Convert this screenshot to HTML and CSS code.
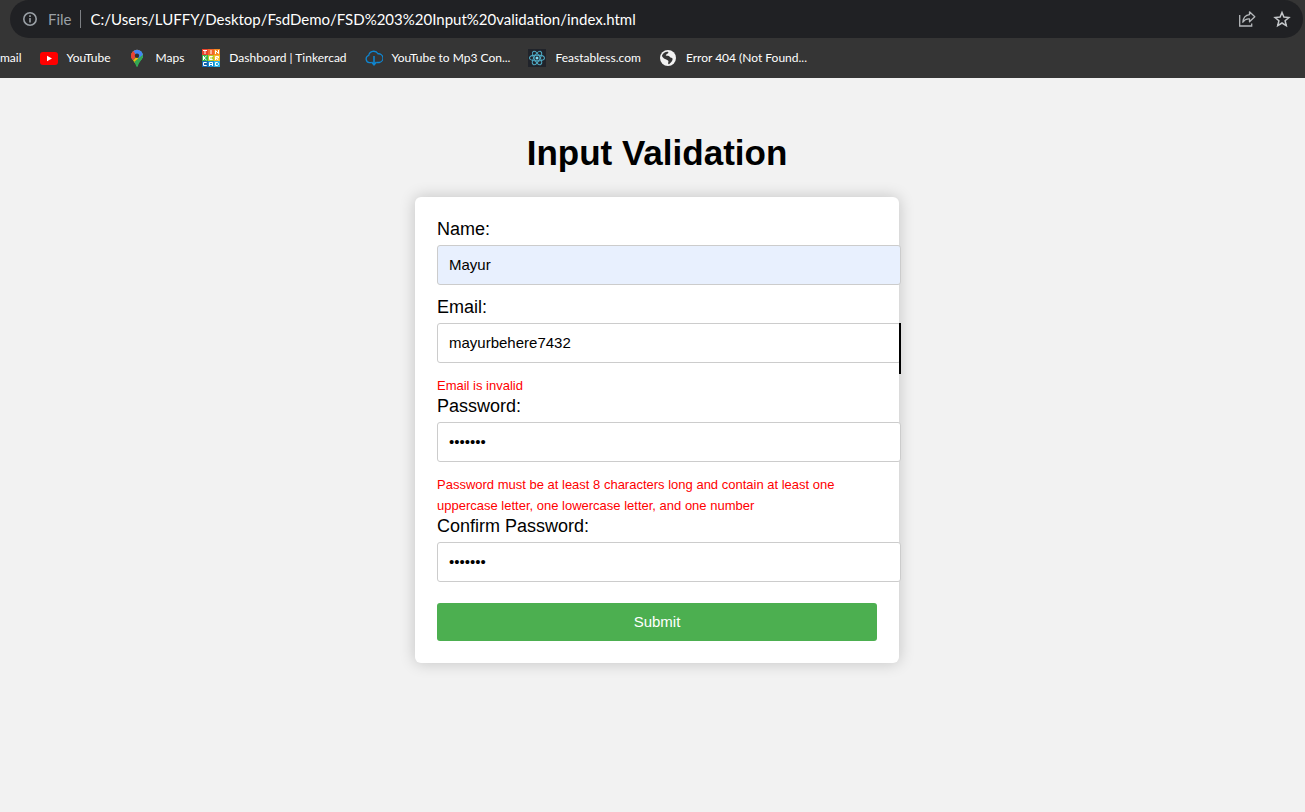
FILE: index.html
```html
<!DOCTYPE html>
<html lang="en">
<head>
<meta charset="utf-8">
<title>Input Validation</title>
<link rel="stylesheet" href="styles.css">
</head>
<body>
<header class="toolbar">
  <div class="address">
    <svg class="address-info" viewBox="0 0 16 16" width="16" height="16" aria-hidden="true"><circle cx="8" cy="8" r="6.2" fill="none" stroke="#9aa0a6" stroke-width="1.6"/><path d="M8 7v4.5M8 4.3v1.6" stroke="#9aa0a6" stroke-width="1.6"/></svg>
    <label class="address-scheme" for="url">File</label>
    <input class="address-url" id="url" type="text" spellcheck="false" value="C:/Users/LUFFY/Desktop/FsdDemo/FSD%203%20Input%20validation/index.html">
    <button class="icon-button" type="button" aria-label="Share"><svg viewBox="0 0 18 18" width="18" height="18" fill="none" stroke="#b4b7ba" stroke-width="1.3"><path d="M1.700 5v11h12v-2.500"/><path d="M11.500 1.800l5.300 5-5.300 5V9C8.500 8.700 6.500 9.700 4.800 12.200 5.200 7.800 7.700 5.200 11.500 4.700z" stroke-linejoin="round"/></svg></button>
    <button class="icon-button" type="button" aria-label="Bookmark this tab"><svg viewBox="0 0 18 18" width="18" height="18" fill="none" stroke="#c4c7ca" stroke-width="1.5"><path d="M9 2.500l1.900 4.600 5 .4-3.800 3.200 1.200 4.900L9 13l-4.300 2.600 1.200-4.900L2.100 7.500l5-.4z"/></svg></button>
  </div>
  <nav class="bookmarks" aria-label="Bookmarks">
    <a class="bookmark bookmark-cut" href="#">mail</a>
    <a class="bookmark" href="#"><svg viewBox="0 0 18 18" width="18" height="18"><rect y="3" width="18" height="13" rx="3" fill="#f00"/><path d="M7 6.700v5.600l5-2.800z" fill="#fff"/></svg>YouTube</a>
    <a class="bookmark" href="#"><svg viewBox="0 0 18 18" width="18" height="18"><defs><clipPath id="pin"><path d="M8 .8a6 6 0 0 1 6 6c0 4-4.300 5.500-5.100 10.200-.2 1-1.600 1-1.800 0C6.300 12.300 2 10.800 2 6.800a6 6 0 0 1 6-6z"/></clipPath></defs><g clip-path="url(#pin)"><path d="M0 0h18v18H0z" fill="#34a853"/><path d="M0 13L14 0H0z" fill="#ea4335"/><path d="M4 2l4-2h8L8 7z" fill="#4285f4"/><path d="M4 2L0 6l1 8 7-7z" fill="#ea4335"/><path d="M2 14l9-10 3 1-9 11z" fill="#fbbc04"/><path d="M8 7l5-6 3 6-6 5z" fill="#4285f4"/><path d="M11 8l4-3v8l-7 5-3-5z" fill="#34a853"/></g><circle cx="8" cy="6.800" r="2.200" fill="#303134"/></svg>Maps</a>
    <a class="bookmark" href="#"><svg viewBox="0 0 18 18" width="18" height="18"><path d="M0 0h6v6H0z" fill="#e8432d"/><path d="M6 0h6v6H6z" fill="#f2652b"/><path d="M12 0h6v6h-6z" fill="#f58a22"/><path d="M0 6h6v6H0z" fill="#36b449"/><path d="M6 6h6v6H6z" fill="#b0c92c"/><path d="M12 6h6v6h-6z" fill="#f5b920"/><path d="M0 12h6v6H0z" fill="#1266b0"/><path d="M6 12h6v6H6z" fill="#168bd0"/><path d="M12 12h6v6h-6z" fill="#27b2e7"/><path d="M1 1.500h4M3 1.500V5M9 1v4M13.500 5V1.500l3 3V1M1.500 7v4M4.500 7L2 9l2.500 2M10.700 7.500H7.500v3h3.200M7.500 9h2.500M13.500 11V7.500h3V9h-3l3 2M4.700 13.500H1.500v3h3.200M7.500 17v-3.500h3V17M7.500 15.500h3M13.500 13.500h2l1 1v1l-1 1h-2z" fill="none" stroke="#fff"/></svg>Dashboard | Tinkercad</a>
    <a class="bookmark" href="#"><svg viewBox="0 0 18 18" width="18" height="18" fill="none" stroke="#0f86d1" stroke-width="1.300"><path d="M6.300 13.700H4.500A3.700 3.700 0 0 1 3.700 6.500 5 5 0 0 1 13 4.800a4.400 4.400 0 0 1 1.300 8.700h-2.600"/><path d="M9 7v8.500M6.500 13L9 15.700l2.500-2.700" stroke-width="1.600"/></svg>YouTube to Mp3 Con...</a>
    <a class="bookmark" href="#"><svg viewBox="0 0 18 18" width="18" height="18"><path d="M0 0h18v18H0z" fill="#20232a"/><g fill="none" stroke="#4fa9c2" stroke-width="1.100"><ellipse cx="9" cy="9" rx="7.500" ry="2.900"/><ellipse cx="9" cy="9" rx="7.500" ry="2.900" transform="rotate(60 9 9)"/><ellipse cx="9" cy="9" rx="7.500" ry="2.900" transform="rotate(120 9 9)"/></g><circle cx="9" cy="9" r="1.500" fill="#7bdcf5"/></svg>Feastabless.com</a>
    <a class="bookmark" href="#"><svg viewBox="0 0 18 18" width="18" height="18"><circle cx="9" cy="9" r="8" fill="#f1f1f1"/><path d="M3 6.500C4 4 6.500 2.500 9 2.800c.8.700.2 1.700-.9 2-.8.300-.6 1.200-1.500 1.500.8.900 3.500.1 4.300 1.600.5 1 2.300.4 2.700 1.800.3 1.700-1.600 3.600-3.300 5.300-1 .8-1.400-.6-1-1.700.6-1.500-.4-2-1.500-2.500C6 10 3 8.600 3 6.500z" fill="#353535"/></svg>Error 404 (Not Found...</a>
  </nav>
</header>
<main class="page">
  <h1 class="title">Input Validation</h1>
  <form class="card" novalidate>
    <label class="label" for="name">Name:</label>
    <input class="field field-filled" id="name" type="text" value="Mayur">
    <label class="label" for="email">Email:</label>
    <div class="field-wrap">
      <input class="field" id="email" type="email" value="mayurbehere7432" aria-describedby="email-error">
      <span class="cursor" aria-hidden="true"></span>
    </div>
    <p class="error" id="email-error">Email is invalid</p>
    <label class="label" for="password">Password:</label>
    <input class="field" id="password" type="password" value="Mayur12" aria-describedby="password-error">
    <p class="error" id="password-error">Password must be at least 8 characters long and contain at least one uppercase letter, one lowercase letter, and one number</p>
    <label class="label" for="confirm">Confirm Password:</label>
    <input class="field" id="confirm" type="password" value="Mayur12">
    <button class="submit" type="submit">Submit</button>
  </form>
</main>
</body>
</html>
```
FILE: styles.css
```css
* {
  box-sizing: border-box;
}

body {
  margin: 0;
  min-height: 100vh;
  background: #f2f2f2;
  color: #000;
  font-family: "Liberation Sans", Arial, sans-serif;
}

.toolbar {
  background: #353535;
  font-family: Lato, sans-serif;
  overflow: hidden;
}

.address {
  display: flex;
  align-items: center;
  height: 38px;
  margin: 0 2px 0 10px;
  padding: 0 12px;
  border-radius: 19px;
  background: #202124;
}

.address-scheme {
  margin-left: 10px;
  padding-right: 8px;
  border-right: 1px solid #7d8084;
  color: #9aa0a6;
  font-size: 15px;
  line-height: 18px;
}

.address-url {
  flex: 1;
  min-width: 0;
  padding: 0 10px;
  border: 0;
  outline: 0;
  background: none;
  color: #fff;
  font-family: inherit;
  font-size: 15px;
}

.icon-button {
  display: flex;
  margin-left: 17px;
  padding: 0;
  border: 0;
  background: none;
}

.bookmarks {
  display: flex;
  align-items: center;
  gap: 18px;
  height: 40px;
}

.bookmark {
  display: flex;
  flex: none;
  align-items: center;
  gap: 9px;
  color: #fff;
  font-size: 12px;
  line-height: 18px;
  text-decoration: none;
}

.bookmark-cut {
  justify-content: flex-end;
  min-width: 18px;
}

.page {
  padding: 55px 0 24px 9px;
}

.title {
  margin: 0 0 24px;
  font-size: 35px;
  line-height: 40px;
  text-align: center;
}

.card {
  max-width: 484px;
  margin: 0 auto;
  padding: 22px;
  border-radius: 6px;
  background: #fff;
  box-shadow: 0 0 16px rgba(0, 0, 0, 0.2);
}

.label {
  display: block;
  margin-bottom: 6px;
  font-size: 18px;
  line-height: 20px;
}

.field-wrap {
  position: relative;
}

.field {
  display: block;
  box-sizing: content-box;
  width: 100%;
  height: 36px;
  margin-bottom: 12px;
  padding: 0 11px 2px;
  border: 1px solid #ccc;
  border-radius: 3px;
  outline: 0;
  background: #fff;
  color: #000;
  font-family: inherit;
  font-size: 15px;
}

.field-filled {
  background: #e8f0fe;
}

.cursor {
  position: absolute;
  top: 0;
  right: -24px;
  width: 2px;
  height: 51px;
  background: #000;
}

.error {
  margin: 0;
  color: #f00;
  font-size: 13px;
  line-height: 21px;
}

.submit {
  display: block;
  width: 100%;
  height: 38px;
  margin-top: 21px;
  padding: 0 0 2px;
  border: 0;
  border-radius: 3px;
  background: #4caf50;
  color: #fff;
  font-family: inherit;
  font-size: 15px;
}
```
